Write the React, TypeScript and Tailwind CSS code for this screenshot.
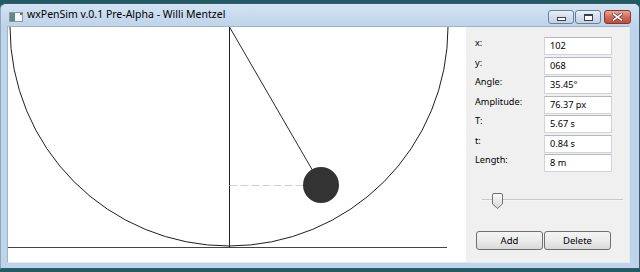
import React from "react";

const rows: [string, string][] = [
  ["x:", "102"],
  ["y:", "068"],
  ["Angle:", "35.45°"],
  ["Amplitude:", "76.37 px"],
  ["T:", "5.67 s"],
  ["t:", "0.84 s"],
  ["Length:", "8 m"],
];

const rowH = ["h-[20px]", "h-[19px]", "h-[20px]", "h-[19px]", "h-[20px]", "h-[19px]", "h-[20px]"];

function WinIcon() {
  return (
    <svg width="14" height="10" viewBox="0 0 14 10">
      <rect x="0.5" y="0.5" width="13" height="9" fill="#f4f6f8" stroke="#8a96a0" />
      <rect x="1" y="1" width="5" height="8" fill="#5e8a86" />
      <rect x="11" y="1" width="2" height="2" fill="#5a6a78" />
    </svg>
  );
}

function CapButton({ kind }: { kind: "min" | "max" }) {
  return (
    <div className="w-[26px] h-[14px] rounded-[3px] border border-[#6b7f98] bg-gradient-to-b from-[#e9f0f8] via-[#d3dfec] to-[#c3d2e4] flex items-center justify-center">
      {kind === "min" ? (
        <div className="w-[9px] h-[4px] mt-[4px] bg-white border border-[#34414f]" />
      ) : (
        <div className="w-[9px] h-[7px] bg-white border border-[#34414f] border-t-2" />
      )}
    </div>
  );
}

function CloseButton() {
  return (
    <div className="w-[27px] h-[14px] rounded-[3px] border border-[#7e3a2e] bg-gradient-to-b from-[#e8a797] via-[#d4695a] to-[#c54b3b] flex items-center justify-center">
      <svg width="11" height="8" viewBox="0 0 11 8">
        <path d="M1.5 1 L9.5 7 M9.5 1 L1.5 7" stroke="#5a2a22" strokeWidth="3" strokeLinecap="square" />
        <path d="M1.5 1 L9.5 7 M9.5 1 L1.5 7" stroke="#ffffff" strokeWidth="1.6" strokeLinecap="square" />
      </svg>
    </div>
  );
}

function Canvas() {
  return (
    <div className="w-[458px] h-full bg-white">
      <svg width="458" height="235" viewBox="0 0 458 235">
        <path d="M 2 0 A 219 219 0 0 0 440 0" fill="none" stroke="#1e1e1e" strokeWidth="1" />
        <line x1="0" y1="220.5" x2="439" y2="220.5" stroke="#444" strokeWidth="1.2" />
        <line x1="221.5" y1="0" x2="221.5" y2="220" stroke="#222" strokeWidth="1" />
        <line x1="221.5" y1="158.5" x2="296" y2="158.5" stroke="#cfcfcf" strokeWidth="1" strokeDasharray="8 3" />
        <line x1="221.5" y1="0" x2="313" y2="158" stroke="#2a2a2a" strokeWidth="1" />
        <circle cx="313" cy="158" r="18" fill="#333333" />
      </svg>
    </div>
  );
}

function Slider() {
  return (
    <div className="relative w-[141px] h-[16px] ml-[7px]">
      <div className="absolute left-0 right-0 top-[6px] h-[2px] bg-[#c8c8c8] border-b border-[#f4f4f4]" />
      <div className="absolute left-[10px] top-0">
        <svg width="11" height="16" viewBox="0 0 11 16">
          <defs>
            <linearGradient id="thumbg" x1="0" y1="0" x2="0" y2="1">
              <stop offset="0" stopColor="#fbfbfb" />
              <stop offset="1" stopColor="#d6d6d6" />
            </linearGradient>
          </defs>
          <path d="M0.5 2 Q0.5 0.5 2 0.5 H9 Q10.5 0.5 10.5 2 V11 L5.5 15.5 L0.5 11 Z" fill="url(#thumbg)" stroke="#707070" />
        </svg>
      </div>
    </div>
  );
}

function Btn({ label }: { label: string }) {
  return (
    <div className="w-[67px] h-[19px] rounded-[3px] border border-[#707070] bg-gradient-to-b from-[#f4f4f4] via-[#ebebeb] to-[#d9d9d9] flex items-center justify-center text-[9.5px] text-black leading-none">
      {label}
    </div>
  );
}

export default function App() {
  return (
    <div className="w-[640px] h-[272px] bg-[#1f5c63] pt-[3px] font-['Noto_Sans',sans-serif] overflow-hidden">
      <div className="h-[266px] w-[640px] rounded-t-[6px] border border-[#3e5870] border-l-[#8ea6bf] bg-[#bfd4ea] flex flex-col">
        <div className="h-[22px] flex items-start bg-gradient-to-b from-[#d3e3f3] to-[#bfd4ea] rounded-t-[5px]">
          <div className="ml-[8px] mt-[8px]">
            <WinIcon />
          </div>
          <div className="ml-[4px] mt-[4px] text-[10.5px] leading-[13px] text-black">
            wxPenSim v.0.1 Pre-Alpha - Willi Mentzel
          </div>
          <div className="flex-1" />
          <div className="flex gap-[1px] mt-[6px] mr-[8px]">
            <CapButton kind="min" />
            <CapButton kind="max" />
            <div className="w-[1px]" />
            <CloseButton />
          </div>
        </div>
        <div className="ml-[6px] w-[623px] h-[237px] border border-[#9fb3c8] border-b-[#dfeaf5] border-r-[#dfeaf5] flex">
          <Canvas />
          <div className="w-[163px] h-full bg-[#f0f0f0] flex flex-col pt-[10px]">
            <div className="flex flex-col">
              {rows.map(([l, v], i) => (
                <div key={l} className={`${rowH[i]} flex items-start`}>
                  <div className="w-[69px] ml-[9px] text-[9.2px] leading-[12px] text-black">{l}</div>
                  <div className="w-[68px] h-[18px] bg-white border border-[#d0d3d8] border-t-[#b4b8be] flex items-center pl-[5px] text-[9.2px] text-black leading-none">
                    {v}
                  </div>
                </div>
              ))}
            </div>
            <div className="mt-[19px] ml-[9px]">
              <Slider />
            </div>
            <div className="mt-[22px] ml-[10px] flex gap-[1px]">
              <Btn label="Add" />
              <Btn label="Delete" />
            </div>
          </div>
        </div>
      </div>
    </div>
  );
}
